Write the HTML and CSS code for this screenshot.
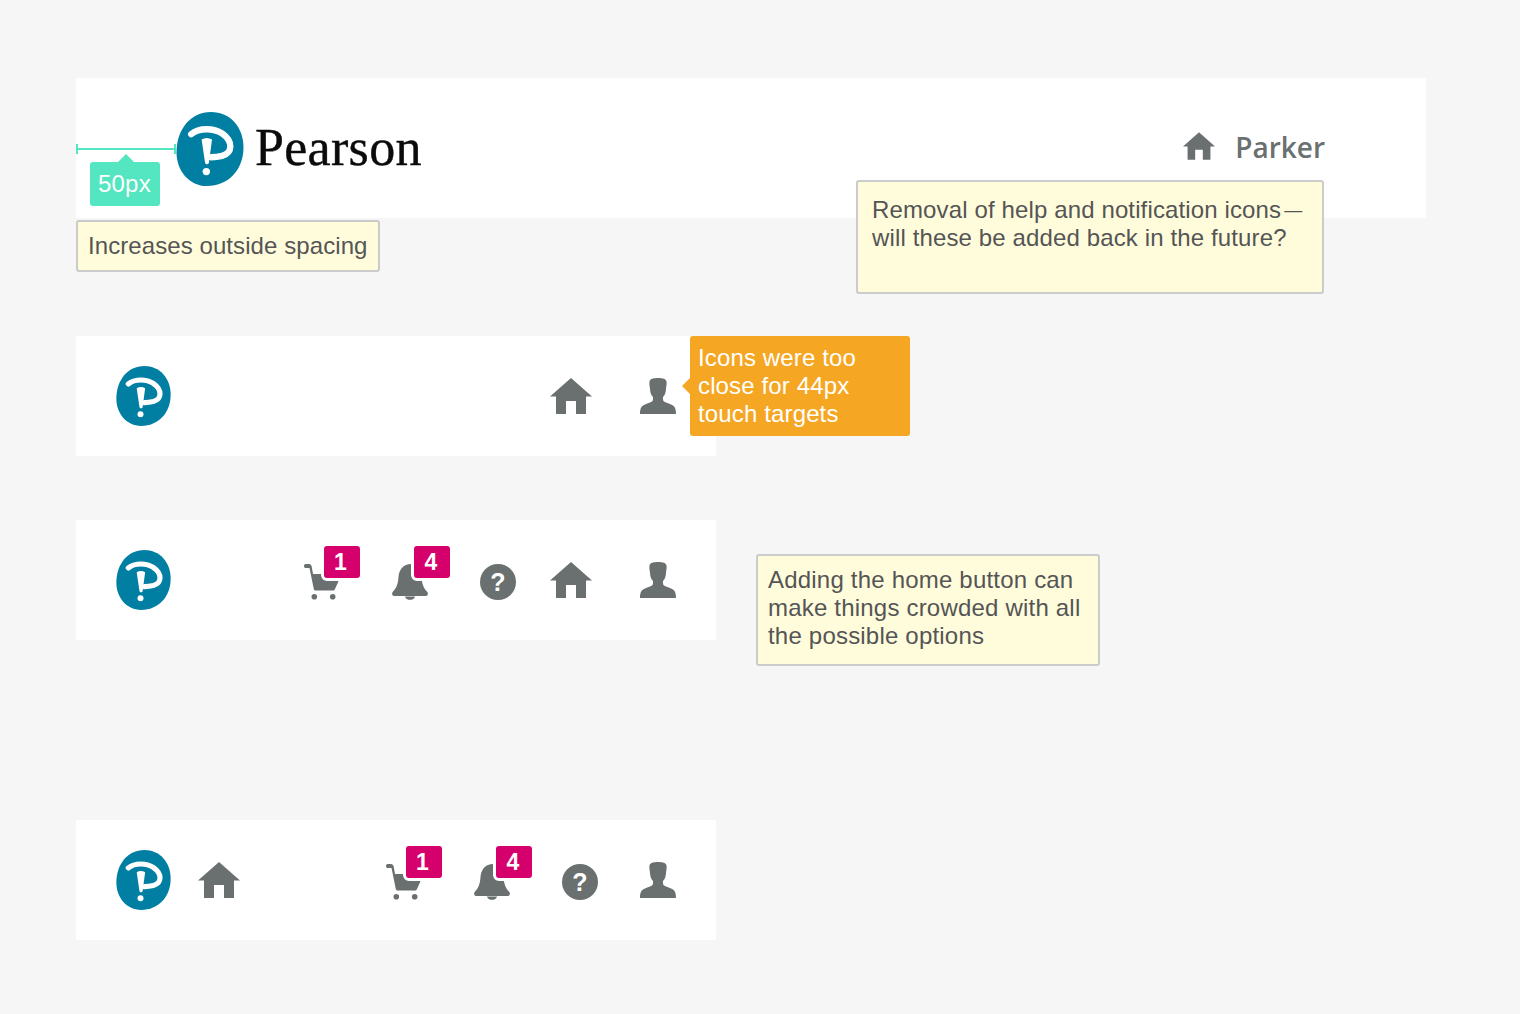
FILE: index.html
```html
<!DOCTYPE html>
<html lang="en">
<head>
<meta charset="utf-8">
<title>Header spacing review</title>
<link rel="stylesheet" href="styles.css">
</head>
<body>
<svg class="defs" aria-hidden="true">
  <symbol id="i-logo" viewBox="0 0 200 221">
    <path fill="#007fa3" d="M103 0C160 0 200 45 200 106C200 172 155 221 91 221C38 221 0 176 0 120C0 52 42 0 103 0Z"/>
    <path fill="none" stroke="#fff" stroke-width="19" stroke-linecap="round" d="M44 66C68 46 112 48 136 64C170 88 168 122 136 131C124 134 114 135 104 135"/>
    <path fill="#fff" d="M75 82C85 76 96 76 106 82L97 150C96 158 86 158 85 150Z"/>
    <circle fill="#fff" cx="89" cy="178" r="11"/>
  </symbol>
  <symbol id="i-home" viewBox="0 0 42 36">
    <path d="M21 0L42 18.500H36V36H26V23H16V36H6V18.500H0Z"/>
  </symbol>
  <symbol id="i-user" viewBox="0 0 36 36">
    <path d="M18 0C22 0 26 .5 26.500 3.500C27 6 26.200 8 26 11C25.800 15 24.500 17.500 23 19C22.800 20.500 23 22 23.500 23C25 24.500 28 25 31 26.500C34.500 28 36 30 36 36H0C0 30 1.500 28 5 26.500C8 25 11 24.500 12.500 23C13 22 13.200 20.500 13 19C11.500 17.500 10.200 15 10 11C9.800 8 9 6 9.500 3.500C10 .5 14 0 18 0Z"/>
  </symbol>
  <symbol id="i-cart" viewBox="0 0 36 36">
    <path d="M1.500 0H5C6.500 0 7.300 1 7.700 2.500L9 10H34.500L34.300 17.700L31 25C30.500 26 30 26.500 29 26.500H12C10.500 26.500 10 26 9.700 24.500L5.500 4H1.500C-.5 4-.5 0 1.500 0Z"/>
    <circle cx="10.300" cy="32.700" r="2.800"/>
    <circle cx="28.700" cy="32.700" r="2.800"/>
  </symbol>
  <symbol id="i-bell" viewBox="0 0 36 36">
    <path d="M18 0C11 .5 7 6 6.500 13C6 20 4.500 24 1 27.500C-.5 29 0 32 2 32H34C36 32 36.500 29 35 27.500C31.500 24 30 20 29.500 13C29 6 25 .5 18 0Z"/>
    <path d="M13 32.500H23C22.500 35 20.500 35.800 18 35.800C15.500 35.800 13.500 35 13 32.500Z"/>
  </symbol>
</svg>

<main class="stage">
  <header class="masthead">
    <svg class="logo logo-large"><use href="#i-logo"/></svg>
    <span class="wordmark">Pearson</span>
    <div class="account">
      <svg class="icon icon-home-small"><use href="#i-home"/></svg>
      <span class="account-name">Parker</span>
    </div>
    <div class="measure"></div>
    <div class="measure-tag">50px</div>
  </header>

  <section class="bar bar-first">
    <svg class="logo"><use href="#i-logo"/></svg>
    <div class="tools">
      <svg class="icon icon-home"><use href="#i-home"/></svg>
      <svg class="icon icon-user gap-home"><use href="#i-user"/></svg>
    </div>
  </section>

  <section class="bar bar-second">
    <svg class="logo"><use href="#i-logo"/></svg>
    <div class="tools">
      <div class="badged">
        <svg class="icon icon-square"><use href="#i-cart"/></svg>
        <span class="badge">1</span>
      </div>
      <div class="badged gap-wide">
        <svg class="icon icon-square"><use href="#i-bell"/></svg>
        <span class="badge badge-bell">4</span>
      </div>
      <div class="help gap-wide">?</div>
      <svg class="icon icon-home gap-help"><use href="#i-home"/></svg>
      <svg class="icon icon-user gap-home"><use href="#i-user"/></svg>
    </div>
  </section>

  <section class="bar bar-third">
    <svg class="logo"><use href="#i-logo"/></svg>
    <svg class="icon icon-home gap-logo"><use href="#i-home"/></svg>
    <div class="tools">
      <div class="badged">
        <svg class="icon icon-square"><use href="#i-cart"/></svg>
        <span class="badge">1</span>
      </div>
      <div class="badged gap-wide">
        <svg class="icon icon-square"><use href="#i-bell"/></svg>
        <span class="badge badge-bell">4</span>
      </div>
      <div class="help gap-wide">?</div>
      <svg class="icon icon-user gap-user"><use href="#i-user"/></svg>
    </div>
  </section>

  <aside class="note note-spacing">Increases outside spacing</aside>
  <aside class="note note-removal">Removal of help and notification icons<span class="dash">—</span><br>will these be added back in the future?</aside>
  <aside class="callout">Icons were too<br>close for 44px<br>touch targets</aside>
  <aside class="note note-home">Adding the home button can<br>make things crowded with all<br>the possible options</aside>
</main>
</body>
</html>
```
FILE: styles.css
```css
* {
  box-sizing: border-box;
}

html,
body {
  margin: 0;
  height: 1014px;
  overflow: hidden;
  background: #f6f6f6;
}

body {
  font-family: "Liberation Sans", Arial, sans-serif;
}

.defs {
  position: absolute;
  width: 0;
  height: 0;
}

.stage {
  position: relative;
  height: 1014px;
  padding: 78px 0 0 76px;
}

.masthead {
  position: relative;
  display: flex;
  align-items: center;
  width: 1350px;
  height: 140px;
  padding: 0 101px 0 100px;
  background: #fff;
}

.logo {
  flex: none;
  width: 55px;
  height: 60px;
}

.logo-large {
  width: 68px;
  height: 74px;
  margin-top: 2px;
}

.wordmark {
  margin: 0 0 0 11px;
  font-family: "Liberation Serif", "Times New Roman", serif;
  font-size: 52px;
  line-height: 60px;
  letter-spacing: 0.3px;
  color: #0b0b0b;
  -webkit-text-stroke: 0.4px #0b0b0b;
}

.account {
  display: flex;
  align-items: center;
  margin-left: auto;
}

.icon {
  flex: none;
  display: block;
  fill: #6a7070;
}

.icon-home-small {
  width: 32px;
  height: 28px;
  margin-top: -4px;
}

.account-name {
  margin: -2px 0 0 20px;
  font-family: "Open Sans", sans-serif;
  font-size: 28px;
  line-height: 36px;
  font-weight: 600;
  color: #6a7070;
}

.measure {
  position: absolute;
  left: 0;
  top: 70px;
  width: 100px;
  height: 2px;
  background: #53e6c0;
}

.measure::before,
.measure::after {
  content: "";
  position: absolute;
  top: -4px;
  width: 2px;
  height: 10px;
  background: #53e6c0;
}

.measure::before {
  left: 0;
}

.measure::after {
  right: 0;
}

.measure-tag {
  position: absolute;
  left: 14px;
  top: 84px;
  width: 70px;
  height: 44px;
  padding-left: 8px;
  border-radius: 3px;
  background: #53e6c0;
  font-size: 24px;
  line-height: 44px;
  letter-spacing: 0.2px;
  color: #fff;
}

.measure-tag::before {
  content: "";
  position: absolute;
  left: 28px;
  top: -8px;
  border-style: solid;
  border-width: 0 8px 8px;
  border-color: transparent transparent #53e6c0;
}

.bar {
  display: flex;
  align-items: center;
  width: 640px;
  height: 120px;
  padding: 0 40px;
  background: #fff;
}

.bar-first {
  margin-top: 118px;
}

.bar-second {
  margin-top: 64px;
}

.bar-third {
  margin-top: 180px;
}

.tools {
  display: flex;
  align-items: center;
  margin-left: auto;
}

.icon-home {
  width: 42px;
  height: 36px;
}

.icon-user,
.icon-square {
  width: 36px;
  height: 36px;
}

.gap-logo {
  margin-left: 27px;
}

.gap-wide {
  margin-left: 52px;
}

.gap-help {
  margin-left: 34px;
}

.gap-home {
  margin-left: 48px;
}

.gap-user {
  margin-left: 42px;
}

.badged {
  position: relative;
  margin-top: 4px;
}

.badge {
  position: absolute;
  left: 17px;
  top: -21px;
  width: 42px;
  height: 38px;
  padding-right: 3px;
  border: 3px solid #fff;
  border-radius: 6px;
  background: #d6006d;
  font-size: 23px;
  font-weight: 700;
  line-height: 32px;
  text-align: center;
  color: #fff;
}

.badge-bell {
  left: 19px;
  padding-right: 2px;
}

.help {
  width: 36px;
  height: 36px;
  margin-top: 4px;
  border-radius: 50%;
  background: #6a7070;
  font-size: 25px;
  font-weight: 700;
  line-height: 36px;
  text-align: center;
  color: #fff;
}

.note {
  position: absolute;
  border: 2px solid #cbcbcb;
  border-radius: 3px;
  background: #fffcdc;
  font-size: 24px;
  line-height: 28px;
  letter-spacing: 0.13px;
  white-space: nowrap;
  color: #555;
}

.note-spacing {
  left: 76px;
  top: 220px;
  width: 304px;
  height: 52px;
  padding: 10px;
  letter-spacing: 0.08px;
}

.note-removal {
  left: 856px;
  top: 180px;
  width: 468px;
  height: 114px;
  padding: 14px;
}

.dash {
  margin-left: 3px;
  font-size: 18px;
  vertical-align: 2px;
}

.note-home {
  left: 756px;
  top: 554px;
  width: 344px;
  height: 112px;
  padding: 10px;
  letter-spacing: 0.2px;
}

.callout {
  position: absolute;
  left: 690px;
  top: 336px;
  width: 220px;
  height: 100px;
  padding: 8px;
  border-radius: 3px;
  background: #f5a623;
  font-size: 24px;
  line-height: 28px;
  letter-spacing: 0.14px;
  white-space: nowrap;
  color: #fff;
}

.callout::before {
  content: "";
  position: absolute;
  left: -8px;
  top: 42px;
  border-style: solid;
  border-width: 8px 8px 8px 0;
  border-color: transparent #f5a623 transparent transparent;
}
```
